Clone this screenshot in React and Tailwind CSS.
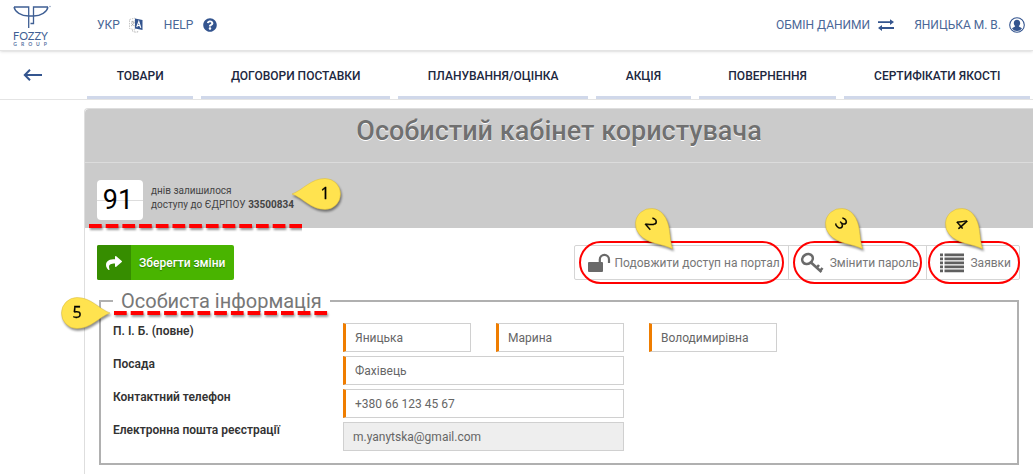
import React from "react";
import clsx from "clsx";
import { FaQuestionCircle, FaShare } from "react-icons/fa";

const tabs = [
	"ТОВАРИ",
	"ДОГОВОРИ ПОСТАВКИ",
	"ПЛАНУВАННЯ/ОЦІНКА",
	"АКЦІЯ",
	"ПОВЕРНЕННЯ",
	"СЕРТИФІКАТИ ЯКОСТІ",
];

function Logo() {
	return (
		<svg className="h-10 w-10 overflow-visible" viewBox="0 0 40 40" fill="none">
			<title>Fozzy Group</title>
			<path
				d="M2 2h14.700v21M36 2H21.500v16.500h-3M2 2c1 5 7 9 14.700 9h4.800C29 11 35 7 36 2"
				stroke="#3f5f94"
				strokeWidth="1.300"
			/>
			<circle cx="38" cy="1.500" r="0.800" fill="#8fa1c0" />
			<text x="1" y="34.500" fontSize="11" fill="#3f5f94" fontFamily="Lato, sans-serif">
				FOZZY
			</text>
			{["G", "R", "O", "U", "P"].map((letter, i) => (
				<text
					key={letter}
					x={3 + i * 7.6}
					y="40.500"
					fontSize="5"
					fontWeight="bold"
					textAnchor="middle"
					fill="#5a75a4"
					fontFamily="Lato, sans-serif"
				>
					{letter}
				</text>
			))}
		</svg>
	);
}

function TranslateIcon() {
	return (
		<svg className="h-4 w-4" viewBox="0 0 16 16" fill="none">
			<path d="M1.500 2.500 7 1v12l-5.500-1.500z" stroke="#b5b5b5" strokeWidth="0.800" strokeDasharray="1.500 1" />
			<path d="M3 5h3.500M4.700 3.800V5M6 5c-.4 2-1.500 3-3 4M3.500 6c.5 1.500 1.500 2.200 3 3" stroke="#999" strokeWidth="0.700" />
			<path d="M7 1.500 14.500 3v10L7 11.500z" fill="#34558f" />
			<path d="m8.800 10 2-5.500 2 6.300M9.500 8.300l2.700.6" stroke="#fff" strokeWidth="1.100" />
			<path d="M4 13.500c2 2 5 2 7 .8" stroke="#999" strokeWidth="0.800" strokeDasharray="1.500 1" />
		</svg>
	);
}

function ExchangeIcon() {
	return (
		<svg className="h-3 w-4" viewBox="0 0 16 12" fill="#34558f">
			<path d="M0 2.200h12V.2L16 3l-4 3V4H0zM16 8H4V6L0 9l4 3v-2h12z" />
		</svg>
	);
}

function UserIcon() {
	return (
		<svg className="h-4 w-4" viewBox="0 0 16 16">
			<circle cx="8" cy="8" r="7.300" fill="#fff" stroke="#34558f" strokeWidth="1.100" />
			<path d="M8 2.800c2 0 3.200 1.400 3.200 3.300 0 1.300-.6 2.500-1.400 3.100.4.900 2.300 1 3.200 2.200A6 6 0 0 1 8 14a6 6 0 0 1-5-2.600c.9-1.200 2.800-1.300 3.200-2.200-.8-.6-1.400-1.800-1.400-3.100 0-1.900 1.200-3.300 3.200-3.300z" fill="#34558f" />
		</svg>
	);
}

function UnlockIcon() {
	return (
		<svg className="h-5 w-6" viewBox="0 0 24 20" fill="none">
			<rect x="1" y="9" width="15" height="10" rx="1" fill="#6a6a6a" />
			<path d="M12.800 10V6.500a4.600 4.600 0 0 1 9.200 0V10" stroke="#6a6a6a" strokeWidth="2.200" />
		</svg>
	);
}

function KeyIcon() {
	return (
		<svg className="h-6 w-6" viewBox="0 0 24 24" fill="none" stroke="#6a6a6a">
			<ellipse cx="7.500" cy="8" rx="5.500" ry="4.700" strokeWidth="2.600" transform="rotate(-35 7.500 8)" />
			<path d="m11 11.500 10.500 9.500M16 17.500l3-3.500M19.500 20.500l3-3.500" strokeWidth="2.600" />
		</svg>
	);
}

function ListIcon() {
	return (
		<svg className="h-5 w-6" viewBox="0 0 24 20" fill="#5f5f5f">
			{[0, 4, 8, 12, 16].map((y) => (
				<path key={y} d={`M0 ${y + 0.5}h3v2.700H0zM4.500 ${y + 0.5}H24v2.700H4.500z`} />
			))}
		</svg>
	);
}

// Yellow drop pointing at a control, the digit turns together with the drop
function Callout({ label, angle, digitAngle = 0, className }) {
	return (
		<svg
			className={clsx("pointer-events-none absolute z-10 h-8 w-8 overflow-visible drop-shadow-[1px_2px_1px_rgba(0,0,0,0.45)]", className)}
			viewBox="0 0 32 32"
		>
			<path
				d="M33 0C22-4 14-15.500 0-15.500a15.500 15.500 0 0 0 0 31C14 15.500 22 4 33 0z"
				transform={`translate(16 16) rotate(${angle})`}
				fill="#ffe34f"
				stroke="#d8b93a"
				strokeWidth="0.500"
			/>
			<text
				transform={`translate(16 16) rotate(${digitAngle})`}
				y="5"
				textAnchor="middle"
				fontSize="16"
				fontFamily="Open Sans, sans-serif"
				fill="#000"
				stroke="#000"
				strokeWidth="0.300"
			>
				{label}
			</text>
		</svg>
	);
}

function DashedLine({ className }) {
	return (
		<svg className={clsx("pointer-events-none absolute z-10 h-1 overflow-visible drop-shadow-[1px_2px_1px_rgba(0,0,0,0.4)]", className)}>
			<path d="M0 2H217" stroke="#f00" strokeWidth="4" strokeDasharray="12.700 4" />
		</svg>
	);
}

function ActionButton({ icon, children, className, ringClassName, calloutClassName, label }) {
	return (
		<button
			type="button"
			className={clsx("relative flex h-[35px] items-center border-[#d5d5d5] text-[12px] text-[#777]", className)}
		>
			{icon}
			{children}
			<span className={clsx("pointer-events-none absolute -inset-y-1 rounded-full border-2 border-[#f00]", ringClassName)} />
			<Callout label={label} angle={49} digitAngle={49} className={calloutClassName} />
		</button>
	);
}

function Field({ id, className, ...rest }) {
	return (
		<input
			id={id}
			className={clsx(
				"h-[29px] border border-[#d0d0d0] text-[12px] text-[#666] outline-none",
				rest.readOnly ? "bg-[#eee] px-[9px]" : "border-l-3 border-l-[#ef7d00] bg-white px-[9px]",
				className
			)}
			{...rest}
		/>
	);
}

function Row({ id, label, children }) {
	return (
		<div className="flex h-[29px]">
			<label htmlFor={id} className="w-[230px] shrink-0 text-[12px] leading-4 font-semibold text-[#333]">
				{label}
			</label>
			{children}
		</div>
	);
}

function TopBar() {
	return (
		<header className="flex h-[51px] items-center justify-between border-b border-[#e4e4e4] pr-2 pl-3 text-[12px] text-[#4a6797] shadow-sm">
			<div className="flex items-center">
				<a href="#home">
					<Logo />
				</a>
				<a href="#language" className="ml-[45px] flex items-center gap-2">
					УКР
					<TranslateIcon />
				</a>
				<a href="#help" className="ml-5 flex items-center gap-2.5">
					HELP
					<FaQuestionCircle className="h-3.5 w-3.5 text-[#34558f]" />
				</a>
			</div>
			<div className="flex items-center gap-5">
				<a href="#exchange" className="flex items-center gap-2">
					ОБМІН ДАНИМИ
					<ExchangeIcon />
				</a>
				<a href="#profile" className="flex items-center gap-2">
					ЯНИЦЬКА М. В.
					<UserIcon />
				</a>
			</div>
		</header>
	);
}

function NavigationBar() {
	return (
		<nav className="flex h-[49px] items-end border-b border-[#e4e4e4] text-[12px] font-medium text-[#1c2740]">
			<a href="#back" aria-label="Назад" className="flex h-full w-[87px] items-center pl-[23px]">
				<svg className="h-3 w-5" viewBox="0 0 20 12" fill="none" stroke="#34558f" strokeWidth="2">
					<path d="M19 6H2M7 .8 1.800 6 7 11.200" />
				</svg>
			</a>
			<div className="flex h-full flex-1 gap-2 pr-[3px]">
				{tabs.map((tab) => (
					<a
						key={tab}
						href="#tab"
						className="flex flex-auto items-center justify-center border-b-3 border-[#d0d8ea] pt-1 whitespace-nowrap"
					>
						{tab}
					</a>
				))}
			</div>
		</nav>
	);
}

function App() {
	return (
		<div className="flex min-h-screen flex-col overflow-hidden bg-white font-['Roboto',sans-serif]">
			<TopBar />
			<NavigationBar />
			<main className="mt-2 ml-[84px] flex-1 rounded-tl border-t border-l border-[#dedede]">
				<h1 className="h-[54px] rounded-tl border-b border-[#dcdcdc] bg-[#cbcbcb] pt-1 text-center text-[27px] leading-[36px] font-medium text-[#707070] [text-shadow:0_1px_0_#fff]">
					Особистий кабінет користувача
				</h1>
				<section className="relative flex h-[65px] items-start gap-2 bg-[#cbcbcb] pt-[17px] pl-3">
					<div className="relative flex h-10 w-[46px] items-center justify-center rounded bg-white pr-1 text-[27px] text-black">
						<span className="absolute inset-x-0 top-1/2 border-t border-[#ddd]" />
						<span className="relative">91</span>
					</div>
					<p className="pt-1 text-[10px] leading-[14px] text-[#444]">
						днів залишилося
						<br />
						доступу до ЄДРПОУ <b>33500834</b>
					</p>
					<Callout label="1" angle={180} className="top-[15px] left-[224px]" />
					<DashedLine className="bottom-0 left-1 w-[213px] [clip-path:inset(-4px_0)]" />
				</section>

				<div className="mt-[17px] mr-[13px] ml-3 flex justify-between">
					<button
						type="button"
						className="flex h-[35px] items-center overflow-hidden rounded-xs bg-[#49b400] pr-[9px] text-[12px] font-medium text-white [text-shadow:0_1px_1px_#2d7a00]"
					>
						<span className="mr-2 flex h-full w-[34px] items-center justify-center bg-[#368d00]">
							<FaShare className="h-4 w-4" />
						</span>
						Зберегти зміни
					</button>
					<div className="flex rounded-xs border border-[#d5d5d5] [&>button]:-my-px">
						<ActionButton
							label="2"
							icon={<UnlockIcon />}
							className="gap-1 pr-2 pl-3"
							ringClassName="inset-x-1"
							calloutClassName="-top-[37px] left-[60px]"
						>
							Подовжити доступ на портал
						</ActionButton>
						<ActionButton
							label="3"
							icon={<KeyIcon />}
							className="gap-[6px] border-l pr-2 pl-[11px]"
							ringClassName="inset-x-1"
							calloutClassName="-top-[37px] left-9"
						>
							Змінити пароль
						</ActionButton>
						<ActionButton
							label="4"
							icon={<ListIcon />}
							className="gap-[6px] border-l pr-2 pl-[13px]"
							ringClassName="left-px -right-px"
							calloutClassName="-top-[37px] left-[18px]"
						>
							Заявки
						</ActionButton>
					</div>
				</div>

				<fieldset className="relative mt-1.5 mr-[14px] ml-[14px] border-2 border-[#b0b0b0] px-3 pb-3">
					<legend className="px-2 text-[20px] leading-[30px] text-[#777]">Особиста інформація</legend>
					<Callout label="5" angle={0} className="-top-[19px] -left-[40px]" />
					<DashedLine className="-top-[5px] left-[13px] w-[217px]" />
					<div className="mt-[7px] flex flex-col gap-1">
						<Row id="surname" label="П. І. Б. (повне)">
							<div className="flex gap-[25px]">
								<Field id="surname" className="w-32" defaultValue="Яницька" />
								<Field id="name" aria-label="Ім'я" className="w-32" defaultValue="Марина" />
								<Field id="patronymic" aria-label="По батькові" className="w-32" defaultValue="Володимирівна" />
							</div>
						</Row>
						<Row id="position" label="Посада">
							<Field id="position" className="w-[281px]" defaultValue="Фахівець" />
						</Row>
						<Row id="phone" label="Контактний телефон">
							<Field id="phone" className="w-[281px]" defaultValue="+380 66 123 45 67" />
						</Row>
						<Row id="email" label="Електронна пошта реєстрації">
							<Field id="email" className="w-[281px]" defaultValue="m.yanytska@gmail.com" readOnly />
						</Row>
					</div>
				</fieldset>
			</main>
		</div>
	);
}

export default App;
